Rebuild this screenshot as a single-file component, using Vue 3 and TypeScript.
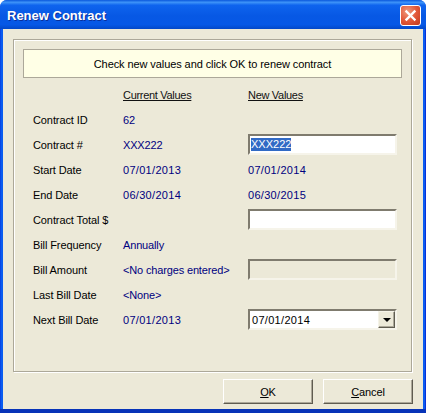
<script setup lang="ts">
interface Row {
  label: string
  current: string
  next?: string
  kind?: 'edit' | 'blank' | 'disabled' | 'combo'
}
const rows: Row[] = [
  { label: 'Contract ID', current: '62' },
  { label: 'Contract #', current: 'XXX222', next: 'XXX222', kind: 'edit' },
  { label: 'Start Date', current: '07/01/2013', next: '07/01/2014' },
  { label: 'End Date', current: '06/30/2014', next: '06/30/2015' },
  { label: 'Contract Total $', current: '', kind: 'blank' },
  { label: 'Bill Frequency', current: 'Annually' },
  { label: 'Bill Amount', current: '<No charges entered>', kind: 'disabled' },
  { label: 'Last Bill Date', current: '<None>' },
  { label: 'Next Bill Date', current: '07/01/2013', next: '07/01/2014', kind: 'combo' },
]
const isDate = (text?: string): boolean => /^\d\d\/\d\d\/\d{4}$/.test(text ?? '')
</script>

<template>
  <div class="window">
    <header class="titlebar">
      <span class="title">Renew Contract</span>
      <button class="close" aria-label="Close">
        <svg width="19" height="19" viewBox="0 0 19 19">
          <path d="M5.5 5.5 L13.5 13.5 M13.5 5.5 L5.5 13.5" stroke="#fff" stroke-width="2.4" stroke-linecap="square" fill="none" />
        </svg>
      </button>
    </header>
    <div class="client">
      <section class="panel">
        <div class="notice">Check new values and click OK to renew contract</div>
        <div class="grid">
          <span></span>
          <span class="head">Current Values</span>
          <span class="head">New Values</span>
          <template v-for="row in rows" :key="row.label">
            <span class="label">{{ row.label }}</span>
            <span class="value" :class="{ date: isDate(row.current) }">{{ row.current }}</span>
            <div class="newcell">
              <div v-if="row.kind === 'edit'" class="field"><span class="selected">{{ row.next }}</span></div>
              <div v-else-if="row.kind === 'blank'" class="field"></div>
              <div v-else-if="row.kind === 'disabled'" class="field disabled"></div>
              <div v-else-if="row.kind === 'combo'" class="field combo">
                <span class="combotext date">{{ row.next }}</span>
                <span class="arrowbtn"><i class="arrow"></i></span>
              </div>
              <span v-else class="value date">{{ row.next }}</span>
            </div>
          </template>
        </div>
      </section>
      <footer class="buttons">
        <button class="btn"><u>O</u>K</button>
        <button class="btn"><u>C</u>ancel</button>
      </footer>
    </div>
  </div>
</template>

<style>
html, body { margin: 0; padding: 0; background: #fff; }
</style>

<style scoped>
.window {
  width: 426px;
  height: 413px;
  box-sizing: border-box;
  display: flex;
  flex-direction: column;
  background: linear-gradient(90deg, #0831d9 0, #0a5cf0 1px, #0a5cf0 425px, #0831d9 425px);
  border-radius: 7px 7px 0 0;
  font-family: "Liberation Sans", Arial, sans-serif;
  font-size: 11px;
  color: #000;
  overflow: hidden;
}
.titlebar {
  height: 29px;
  flex: none;
  box-sizing: border-box;
  display: flex;
  align-items: center;
  justify-content: space-between;
  padding: 2px 5px 0 7px;
  background: linear-gradient(180deg, #0a58dc 0%, #3d93f8 8%, #0e64ee 18%, #0758e4 55%, #0658e6 85%, #0348c8 100%);
}
.title {
  color: #fff;
  font-weight: 700;
  font-size: 13px;
  text-shadow: 1px 1px 0 #0a2f9a;
}
.close {
  width: 21px;
  height: 21px;
  padding: 0;
  border: 1px solid #fff;
  border-radius: 3px;
  box-sizing: border-box;
  background: radial-gradient(circle at 35% 30%, #ef9a7c 0%, #e2593a 50%, #c2391c 100%);
  display: flex;
  align-items: center;
  justify-content: center;
}
.close svg { flex: none; }
.client {
  flex: 1;
  margin: 0 3px;
  background: #ece9d8;
  display: flex;
  flex-direction: column;
  padding: 10px 10px 0;
  min-height: 0;
}
.window::after {
  content: "";
  height: 4px;
  flex: none;
  background: #0733b8;
}
.panel {
  height: 333px;
  box-sizing: border-box;
  margin-right: 1px;
  border: 1px solid #aca899;
  box-shadow: inset 1px 1px 0 #fff, 1px 1px 0 #fff;
  padding: 9px;
  flex: none;
}
.notice {
  height: 29px;
  box-sizing: border-box;
  background: #ffffe6;
  border: 1px solid #aca899;
  display: flex;
  align-items: center;
  justify-content: center;
  letter-spacing: -0.085px;
}
.grid {
  display: grid;
  grid-template-columns: 90px 125px 149px;
  grid-auto-rows: 25px;
  padding: 4px 0 0 10px;
  align-items: center;
}
.head { text-decoration: underline; color: #111; letter-spacing: -0.3px; }
.label { color: #000; letter-spacing: -0.1px; }
.value { color: #00007f; letter-spacing: -0.15px; }
.value.date, .date { letter-spacing: 0.3px; }
.newcell { display: flex; align-items: center; height: 25px; }
.field {
  width: 149px;
  height: 21px;
  box-sizing: border-box;
  background: #fff;
  border: 2px solid;
  border-color: #7f7b6e #f6f4ea #f6f4ea #7f7b6e;
  display: flex;
  align-items: center;
}
.field.disabled { background: #ece9d8; }
.selected { background: #316ac5; color: #fff; margin-left: 1px; line-height: 13px; }
.combo { justify-content: space-between; }
.combotext { padding-left: 2px; }
.arrowbtn {
  width: 17px;
  height: 17px;
  box-sizing: border-box;
  background: #ece9d8;
  border: 1px solid;
  border-color: #f5f3e8 #5f5c50 #5f5c50 #f5f3e8;
  box-shadow: inset -1px -1px 0 #aca899;
  display: flex;
  align-items: center;
  justify-content: center;
}
.arrow {
  width: 0;
  height: 0;
  border-left: 4px solid transparent;
  border-right: 4px solid transparent;
  border-top: 4px solid #000;
}
.buttons {
  display: flex;
  justify-content: flex-end;
  gap: 10px;
  margin-top: 7px;
}
.btn {
  width: 90px;
  height: 25px;
  box-sizing: border-box;
  padding: 0;
  background: #ece9d8;
  font: inherit;
  letter-spacing: -0.1px;
  color: #000;
  border: 1px solid;
  border-color: #fff #5f5c50 #5f5c50 #fff;
  box-shadow: inset -1px -1px 0 #aca899;
}
</style>
